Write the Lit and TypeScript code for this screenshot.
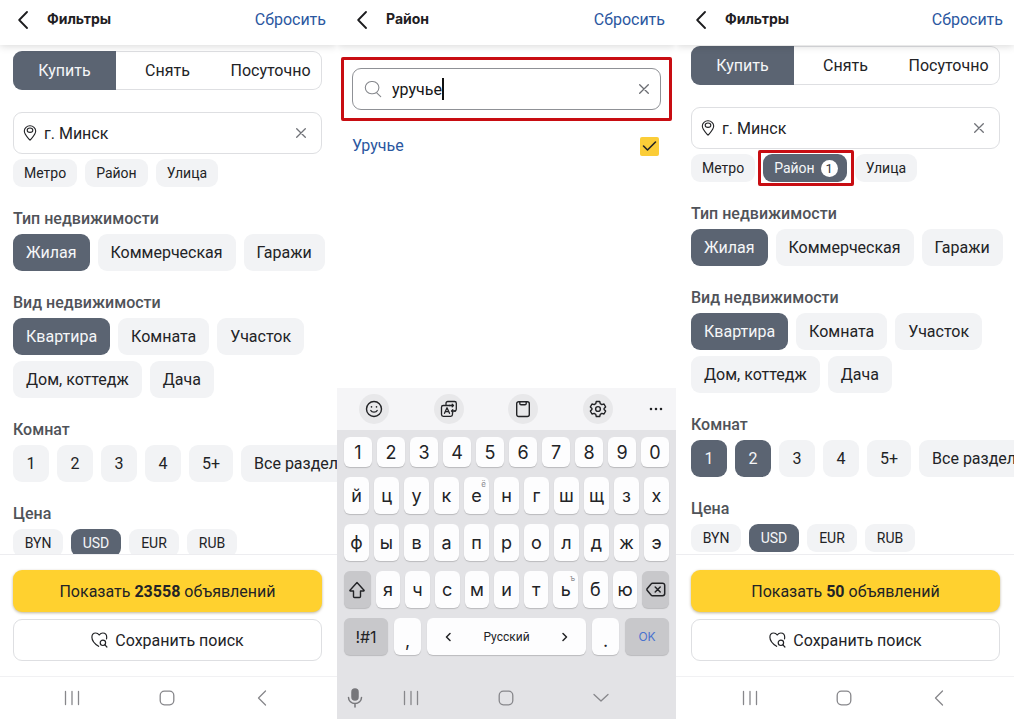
import { LitElement, html, css, nothing } from "lit";
import { customElement, property } from "lit/decorators.js";
import { classMap } from "lit/directives/class-map.js";

const base = css`
  *,
  *::before,
  *::after {
    box-sizing: border-box;
  }
  button,
  input {
    font: inherit;
    color: inherit;
    margin: 0;
    padding: 0;
    border: 0;
    background: none;
  }
  button {
    cursor: pointer;
    display: flex;
    align-items: center;
    justify-content: center;
    white-space: nowrap;
  }
  svg {
    display: block;
    flex: none;
    fill: none;
    stroke: currentColor;
    stroke-linecap: round;
    stroke-linejoin: round;
  }
`;

const closeIcon = html`<svg width="10" height="10" viewBox="0 0 10 10" stroke-width="1.3"><path d="M.7.7l8.6 8.6M9.3.7L.7 9.3" /></svg>`;
const pinIcon = html`<svg width="14" height="16" viewBox="0 0 14 16" stroke-width="1.1"><path d="M7 15.2C4.6 12.3 1.3 9.4 1.3 6A5.6 5.3 0 0 1 7 .8 5.6 5.3 0 0 1 12.7 6C12.7 9.4 9.4 12.3 7 15.2z" /><ellipse cx="7" cy="5.2" rx="2.8" ry="2.2" /></svg>`;
const searchIcon = html`<svg width="18" height="18" viewBox="0 0 18 18" stroke-width="1.1"><rect x="1.3" y="1.5" width="13.6" height="12.2" rx="6.1" /><path d="M12.7 12.8l4 3.8" /></svg>`;
const heartIcon = html`<svg width="17" height="16" viewBox="0 0 17 16" stroke-width="1.2"><path d="M7.6 14.3C4.5 12.3.9 9 .9 5.2.9 2.8 2.5 1 4.7 1c1.5 0 2.6.7 3.5 2C9.2 1.7 10.3 1 11.8 1c2.3 0 3.900 1.800 3.900 4.200 0 .6-.1 1.100-.2 1.600" /><circle cx="11.9" cy="10.8" r="2.7" /><path d="M13.9 12.9l2 2.1" /></svg>`;

@customElement("screen-header")
class ScreenHeader extends LitElement {
  @property() heading = "";

  static styles = [
    base,
    css`
      :host {
        display: block;
        position: relative;
        z-index: 1;
        flex: none;
        background: #fff;
        box-shadow: 0 1px 8px rgba(0, 0, 0, 0.16);
      }
      .bar {
        display: flex;
        align-items: center;
        height: 45px;
        padding: 0 11px 6px var(--start);
      }
      .back {
        width: 20px;
        height: 20px;
        margin-right: 14px;
        color: #1c1c1e;
      }
      h1 {
        flex: 1;
        margin: 0;
        padding-bottom: 2px;
        font-family: Inter, Roboto, sans-serif;
        font-size: 14px;
        line-height: 20px;
        font-weight: 700;
        color: #1f2023;
      }
      .reset {
        color: #2b579f;
        text-decoration: none;
        font-size: 16px;
        line-height: 20px;
      }
    `,
  ];

  render() {
    return html`<header class="bar">
      <button class="back" aria-label="Назад">
        <svg width="10" height="18" viewBox="0 0 10 18" stroke-width="1.8"><path d="M9 1L1.2 9 9 17" /></svg>
      </button>
      <h1>${this.heading}</h1>
      <a class="reset" href="#">Сбросить</a>
    </header>`;
  }
}

@customElement("system-nav")
class SystemNav extends LitElement {
  @property({ type: Boolean }) typing = false;

  static styles = [
    base,
    css`
      :host {
        display: block;
        flex: none;
      }
      nav {
        display: grid;
        grid-template-columns: calc(var(--start) + 12px) repeat(3, 1fr) 28px;
        align-items: center;
        height: 42px;
        color: #87878b;
      }
      button {
        height: 42px;
      }
      .mic {
        grid-column: 1;
        color: #77777b;
        padding-left: 9px;
      }
      .recents {
        grid-column: 2;
      }
    `,
  ];

  render() {
    return html`<nav>
      ${this.typing
        ? html`<button class="mic" aria-label="Голосовой ввод">
            <svg width="16" height="20" viewBox="0 0 16 20" stroke-width="1.5">
              <rect x="5" y="1" width="6" height="11" rx="3" fill="currentColor" />
              <path d="M1.5 9.5a6.5 6 0 0 0 13 0M8 15.5V19" />
            </svg>
          </button>`
        : nothing}
      <button class="recents" aria-label="Недавние">
        <svg width="16" height="16" viewBox="0 0 16 16" stroke-width="1.3"><path d="M1.5 1.5v13M8 1.5v13M14.5 1.5v13" /></svg>
      </button>
      <button aria-label="Домой">
        <svg width="16" height="16" viewBox="0 0 16 16" stroke-width="1.3"><rect x="1.2" y="1.2" width="13.6" height="13.6" rx="4.2" /></svg>
      </button>
      <button aria-label="Назад">
        ${this.typing
          ? html`<svg width="16" height="16" viewBox="0 0 16 16" stroke-width="1.3"><path d="M1 4.5l7 6.5 7-6.5" /></svg>`
          : html`<svg width="16" height="16" viewBox="0 0 16 16" stroke-width="1.3"><path d="M11.5 1L4.5 8l7 7" /></svg>`}
      </button>
    </nav>`;
  }
}

interface Chip {
  label: string;
  on?: boolean;
  count?: number;
}

@customElement("chip-row")
class ChipRow extends LitElement {
  @property({ attribute: false }) chips: Chip[] = [];
  @property({ type: Boolean }) small = false;
  @property({ type: Boolean }) scroll = false;

  static styles = [
    base,
    css`
      :host {
        display: block;
      }
      .row {
        display: flex;
        flex-wrap: wrap;
        gap: 6px 8px;
      }
      .row.scroll {
        flex-wrap: nowrap;
      }
      .chip {
        flex: none;
        position: relative;
        height: 37px;
        min-width: 36px;
        padding: 0 13px;
        border-radius: 9px;
        background: #f2f3f5;
        color: #222326;
        font-size: 16px;
      }
      .small .chip {
        height: 28px;
        min-width: 50px;
        padding: 0 11px;
        font-size: 14px;
      }
      .chip.on {
        background: #5b6472;
        color: #f5f6f8;
      }
      .count {
        display: grid;
        place-items: center;
        width: 17px;
        height: 17px;
        margin: 0 -2px 0 6px;
        border-radius: 50%;
        background: #fff;
        color: #33363c;
        font-size: 13px;
      }
      .mark {
        position: absolute;
        inset: -4px -7px -4px -5px;
        border: 3px solid #c80d12;
        border-radius: 2px;
      }
    `,
  ];

  render() {
    return html`<div class=${classMap({ row: true, small: this.small, scroll: this.scroll })}>
      ${this.chips.map(
        (c) => html`<button class=${classMap({ chip: true, on: !!c.on })} aria-pressed=${c.on ? "true" : "false"}>
          ${c.label}${c.count ? html`<span class="count">${c.count}</span><span class="mark"></span>` : nothing}
        </button>`
      )}
    </div>`;
  }
}

@customElement("filter-screen")
class FilterScreen extends LitElement {
  @property() found = "";
  @property({ type: Number }) districts = 0;
  @property({ attribute: false }) rooms: string[] = [];

  static styles = [
    base,
    css`
      :host {
        display: flex;
        flex-direction: column;
        min-width: 0;
        overflow: hidden;
        background: #fff;
      }
      .body {
        flex: 1;
        min-height: 0;
        overflow: hidden;
        display: flex;
        flex-direction: column;
        gap: 22px;
        padding: var(--top) var(--end) 0 var(--start);
      }
      .segments {
        flex: none;
        display: grid;
        grid-template-columns: repeat(3, 1fr);
        height: 39px;
        border-radius: 9px;
        box-shadow: inset 0 0 0 1px #dedfe2;
        overflow: hidden;
        font-size: 16px;
        color: #222326;
      }
      .segments .on {
        background: #5b6472;
        color: #f5f6f8;
      }
      .place {
        flex: none;
        display: flex;
        flex-direction: column;
        gap: 5px;
      }
      .field {
        display: flex;
        align-items: center;
        gap: 7px;
        height: 42px;
        padding: 0 15px 0 9px;
        border: 1px solid #dedfe2;
        border-radius: 9px;
        font-size: 16px;
        color: #222326;
      }
      .field label {
        display: flex;
      }
      .field input {
        flex: 1;
        min-width: 0;
        outline: 0;
      }
      .clear {
        color: #707278;
      }
      section {
        flex: none;
        display: flex;
        flex-direction: column;
        gap: 5px;
      }
      h2 {
        margin: 0;
        font-size: 16px;
        line-height: 20px;
        font-weight: 500;
        color: #505359;
      }
      footer {
        flex: none;
        display: flex;
        flex-direction: column;
        gap: 7px;
        padding: 15px var(--end) 15px var(--start);
        border-top: 1px solid #ededf0;
        border-bottom: 1px solid #f1f1f3;
      }
      footer button {
        height: 42px;
        border-radius: 9px;
        font-size: 16px;
        color: #222326;
      }
      .show {
        background: #ffd12f;
        box-shadow: 0 1px 3px rgba(90, 70, 0, 0.4);
        white-space: pre;
      }
      .show b {
        font-weight: 700;
      }
      .save {
        border: 1px solid #dedfe2;
        gap: 7px;
      }
    `,
  ];

  render() {
    const room = (label: string): Chip => ({ label, on: this.rooms.includes(label) });
    return html`
      <screen-header heading="Фильтры"></screen-header>
      <div class="body">
        <div class="segments">
          <button class="on">Купить</button>
          <button>Снять</button>
          <button>Посуточно</button>
        </div>
        <div class="place">
          <div class="field">
            <label for="city" aria-label="Город">${pinIcon}</label>
            <input id="city" type="text" .value=${"г. Минск"} />
            <button class="clear" aria-label="Очистить">${closeIcon}</button>
          </div>
          <chip-row
            small
            .chips=${[
              { label: "Метро" },
              { label: "Район", on: this.districts > 0, count: this.districts },
              { label: "Улица" },
            ]}
          ></chip-row>
        </div>
        <section>
          <h2>Тип недвижимости</h2>
          <chip-row .chips=${[{ label: "Жилая", on: true }, { label: "Коммерческая" }, { label: "Гаражи" }]} scroll></chip-row>
        </section>
        <section>
          <h2>Вид недвижимости</h2>
          <chip-row
            .chips=${[
              { label: "Квартира", on: true },
              { label: "Комната" },
              { label: "Участок" },
              { label: "Дом, коттедж" },
              { label: "Дача" },
            ]}
          ></chip-row>
        </section>
        <section>
          <h2>Комнат</h2>
          <chip-row scroll .chips=${[...["1", "2", "3", "4", "5+"].map(room), { label: "Все раздельные" }]}></chip-row>
        </section>
        <section>
          <h2>Цена</h2>
          <chip-row small .chips=${[{ label: "BYN" }, { label: "USD", on: true }, { label: "EUR" }, { label: "RUB" }]}></chip-row>
        </section>
      </div>
      <footer>
        <button class="show">Показать <b>${this.found}</b> объявлений</button>
        <button class="save">${heartIcon}Сохранить поиск</button>
      </footer>
      <system-nav></system-nav>
    `;
  }
}

@customElement("phone-keyboard")
class PhoneKeyboard extends LitElement {
  static styles = [
    base,
    css`
      :host {
        display: block;
        flex: none;
        background: #e3e3e6;
        color: #222326;
        font-family: Inter, Roboto, sans-serif;
      }
      .tools {
        display: grid;
        grid-template-columns: repeat(4, 11fr) 6fr;
        place-items: center;
        height: 42px;
        background: #f5f5f7;
      }
      .tool {
        width: 30px;
        height: 30px;
        border-radius: 50%;
        background: #e8e8ea;
      }
      .more {
        width: 30px;
        height: 30px;
      }
      .keys {
        display: flex;
        flex-direction: column;
        gap: 10px;
        padding: 7px 7px 22px;
      }
      .row {
        display: flex;
        gap: 5px;
      }
      .key {
        flex: 25 1 0;
        min-width: 0;
        position: relative;
        height: 37px;
        border-radius: 6px;
        background: #fdfdfe;
        box-shadow: 0 1px 1px rgba(0, 0, 0, 0.18);
        font-size: 18px;
      }
      .digits .key {
        height: 30px;
      }
      .key.fn {
        flex-grow: 27;
        background: #c8c8cb;
      }
      .bottom {
        display: grid;
        grid-template-columns: 44fr 27fr 159fr 27fr 44fr;
        gap: 6px;
      }
      .bottom .fn {
        font-size: 16px;
      }
      .bottom .space {
        justify-content: space-between;
        padding: 0 18px;
        font-family: Roboto, sans-serif;
        font-size: 12px;
      }
      .bottom .punct {
        align-items: flex-end;
        padding-bottom: 4px;
      }
      .bottom .ok {
        color: #4a73cf;
        font-size: 12px;
      }
      .alt {
        position: absolute;
        top: 2px;
        right: 3px;
        font-size: 8px;
        line-height: 10px;
        color: #8c8c90;
      }
    `,
  ];

  private key(k: string) {
    const alt = ({ е: "ё", ь: "ъ" } as Record<string, string>)[k];
    return html`<button class="key">${k}${alt ? html`<span class="alt">${alt}</span>` : nothing}</button>`;
  }

  render() {
    return html`
      <div class="tools">
        <button class="tool" aria-label="Эмодзи">
          <svg width="18" height="18" viewBox="0 0 18 18" stroke-width="1.4">
            <circle cx="9" cy="9" r="7.5" />
            <path d="M5.8 10.500c1.200 2.200 5.200 2.200 6.400 0" />
            <path d="M6.500 6.800v.2M11.500 6.800v.2" stroke-width="1.6" />
          </svg>
        </button>
        <button class="tool" aria-label="Перевод">
          <svg width="18" height="18" viewBox="0 0 18 18" stroke-width="1.3">
            <path d="M6 4.500V3.300A1.800 1.800 0 0 1 7.800 1.500h6.700a1.800 1.800 0 0 1 1.800 1.800v6a1.800 1.800 0 0 1-1.800 1.800" />
            <path d="M10 5.500H3.300a1.800 1.800 0 0 0-1.800 1.800v7.200a1.800 1.800 0 0 0 1.800 1.800h7.400a1.800 1.800 0 0 0 1.800-1.800V13" />
            <path d="M4.500 13.300L7 7.800l2.500 5.500M5.400 11.600h3.200M9.500 5.500h4M12.200 4.200l1.300 1.300-1.300 1.300M15.500 11h-4M12.800 9.700L11.500 11l1.300 1.300" />
          </svg>
        </button>
        <button class="tool" aria-label="Буфер обмена">
          <svg width="16" height="18" viewBox="0 0 16 18" stroke-width="1.4">
            <rect x="1.700" y="1.700" width="12.600" height="14.800" rx="2" />
            <path d="M4.800 1.700v1.800c0 .8.400 1.200 1.200 1.200h4c.8 0 1.200-.4 1.200-1.200V1.700" />
          </svg>
        </button>
        <button class="tool" aria-label="Настройки">
          <svg width="18" height="18" viewBox="0 0 18 18" stroke-width="1.4">
            <path d="M7.300 1.500h3.400l.6 2.200 1.500.9 2.200-.6 1.600 2.900-1.500 1.600v1l1.500 1.600-1.600 2.900-2.200-.6-1.500.9-.6 2.200H7.300l-.6-2.200-1.500-.9-2.200.6-1.600-2.900 1.500-1.600v-1L1.400 6.900 3 4l2.200.6 1.500-.9z" />
            <circle cx="9" cy="9" r="2.4" />
          </svg>
        </button>
        <button class="more" aria-label="Ещё">
          <svg width="14" height="4" viewBox="0 0 14 4" stroke-width="2.6"><path d="M2 2h0M7 2h0M12 2h0" /></svg>
        </button>
      </div>
      <div class="keys">
        <div class="row digits">${[..."1234567890"].map((k) => this.key(k))}</div>
        <div class="row">${[..."йцукенгшщзх"].map((k) => this.key(k))}</div>
        <div class="row">${[..."фывапролджэ"].map((k) => this.key(k))}</div>
        <div class="row">
          <button class="key fn" aria-label="Shift">
            <svg width="16" height="18" viewBox="0 0 16 18" stroke-width="1.4"><path d="M8 1.500L1 9.200c-.3.400-.1.800.4.800h3.100v5.500c0 .6.300 1 1 1h5c.7 0 1-.4 1-1V10h3.100c.5 0 .7-.4.400-.8z" /></svg>
          </button>
          ${[..."ячсмитьбю"].map((k) => this.key(k))}
          <button class="key fn" aria-label="Удалить">
            <svg width="20" height="15" viewBox="0 0 20 15" stroke-width="1.5"><path d="M6.500 1.200h10a2.200 2.200 0 0 1 2.200 2.200v8.200a2.200 2.200 0 0 1-2.200 2.200h-10c-.6 0-1-.2-1.400-.7L1.300 8.600c-.5-.7-.5-1.500 0-2.200l3.800-4.500c.4-.5.8-.7 1.400-.7zM9.200 5l5 5M14.200 5l-5 5" /></svg>
          </button>
        </div>
        <div class="row bottom">
          <button class="key fn">!#1</button>
          <button class="key punct">,</button>
          <button class="key space">
            <svg width="6" height="10" viewBox="0 0 6 10" stroke-width="1.5"><path d="M5 1.500L1.500 5 5 8.500" /></svg>
            Русский
            <svg width="6" height="10" viewBox="0 0 6 10" stroke-width="1.5"><path d="M1 1.500L4.500 5 1 8.500" /></svg>
          </button>
          <button class="key punct">.</button>
          <button class="key fn ok">OK</button>
        </div>
      </div>
      <system-nav typing></system-nav>
    `;
  }
}

@customElement("district-screen")
class DistrictScreen extends LitElement {
  static styles = [
    base,
    css`
      :host {
        display: flex;
        flex-direction: column;
        min-width: 0;
        overflow: hidden;
        background: #fff;
      }
      .body {
        flex: 1;
        min-height: 0;
        padding: 12px 4px 0;
      }
      .marked {
        position: relative;
        z-index: 2;
        padding: 8px;
        border: 3px solid #c80d12;
        border-radius: 2px;
        background: #fff;
      }
      .field {
        display: flex;
        align-items: center;
        height: 42px;
        padding: 0 11px;
        border: 1px solid #8f9196;
        border-radius: 9px;
        font-size: 16px;
        color: #161618;
      }
      .field label {
        display: flex;
        margin-right: 10px;
        color: #85878c;
      }
      .field input {
        field-sizing: content;
        outline: 0;
      }
      .caret {
        width: 2px;
        height: 22px;
        background: #111;
      }
      .clear {
        width: 10px;
        margin-left: auto;
        color: #6b6d72;
      }
      .option {
        display: flex;
        align-items: center;
        justify-content: space-between;
        padding: 15px 13px 0 11px;
        font-size: 16px;
        line-height: 20px;
        color: #2b579f;
      }
      .tick {
        display: grid;
        place-items: center;
        color: #222326;
      }
      .tick > * {
        grid-area: 1 / 1;
      }
      .tick input {
        appearance: none;
        width: 19px;
        height: 19px;
        border-radius: 2px;
        background: #fbcd38;
      }
      .tick svg {
        pointer-events: none;
      }
    `,
  ];

  render() {
    return html`
      <screen-header heading="Район"></screen-header>
      <div class="body">
        <div class="marked">
          <div class="field">
            <label for="query" aria-label="Поиск района">${searchIcon}</label>
            <input id="query" type="text" value="уручье" />
            <span class="caret"></span>
            <button class="clear" aria-label="Очистить">${closeIcon}</button>
          </div>
        </div>
        <div class="option">
          <label for="district">Уручье</label>
          <span class="tick">
            <input id="district" type="checkbox" checked />
            <svg width="15" height="12" viewBox="0 0 15 12" stroke-width="1.6"><path d="M1.5 6l4 4 8-8" /></svg>
          </span>
        </div>
      </div>
      <phone-keyboard></phone-keyboard>
    `;
  }
}

@customElement("app-root")
class AppRoot extends LitElement {
  static styles = css`
    :host {
      display: grid;
      grid-template-columns: 337fr 339fr 338fr;
      grid-template-rows: minmax(0, 1fr);
      height: 100vh;
      overflow: hidden;
      background: #fff;
      font-family: Roboto, "Noto Sans", sans-serif;
    }
    .first {
      --start: 13px;
      --end: 15px;
      --top: 6px;
    }
    .second,
    .third {
      --start: 15px;
      --end: 14px;
      --top: 1px;
    }
  `;

  render() {
    return html`
      <filter-screen class="first" found="23558"></filter-screen>
      <district-screen class="second"></district-screen>
      <filter-screen class="third" found="50" districts="1" .rooms=${["1", "2"]}></filter-screen>
    `;
  }
}
